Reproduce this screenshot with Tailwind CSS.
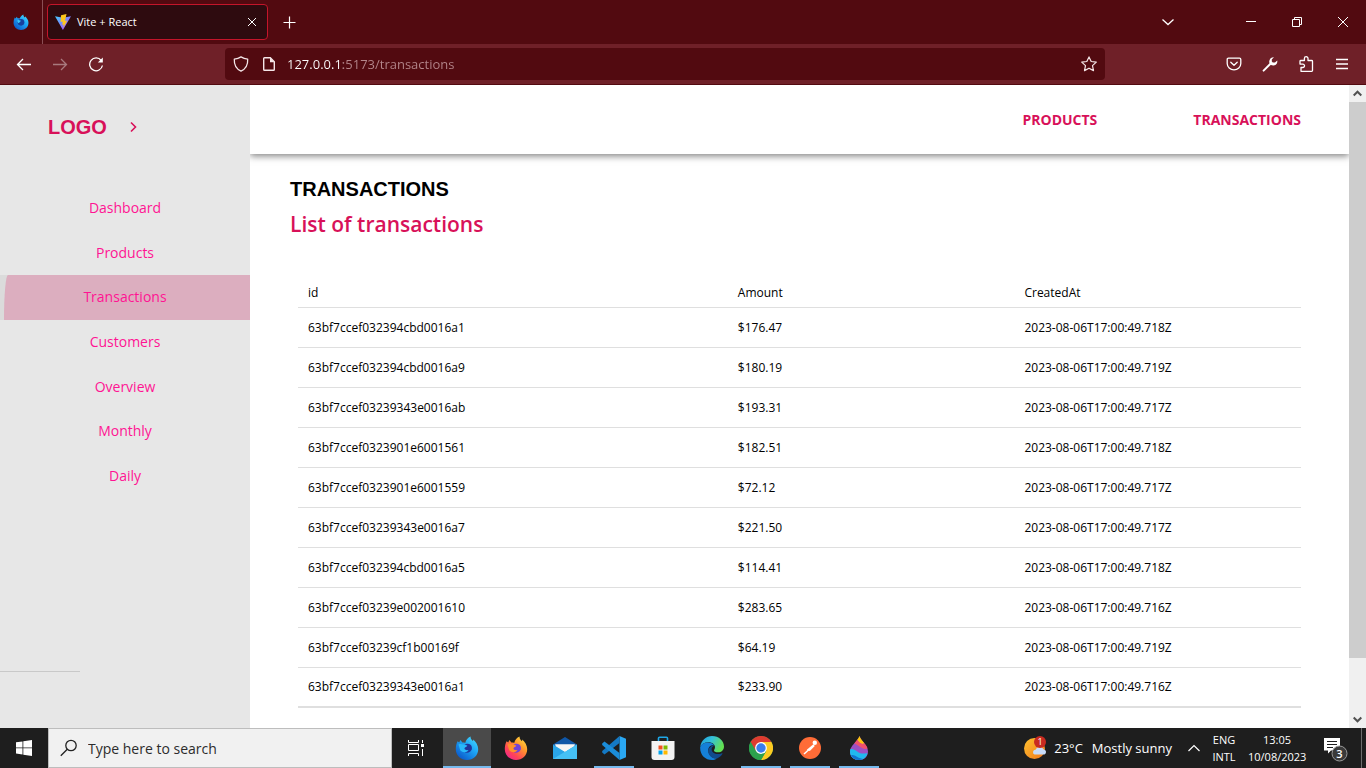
<!DOCTYPE html>
<html lang="en">
<head>
<meta charset="utf-8">
<meta name="viewport" content="width=device-width, initial-scale=1">
<title>Vite + React</title>
<script src="https://cdn.jsdelivr.net/npm/@tailwindcss/browser@4"></script>
</head>
<body class="flex h-screen flex-col overflow-hidden bg-white font-['Open_Sans','Noto_Sans',sans-serif]">

<!-- Shared colour definitions for the browser and app logos -->
<svg class="absolute size-0" aria-hidden="true">
  <defs>
    <linearGradient id="foxBlue" x1="1" y1="0" x2="0.2" y2="1"><stop offset="0" stop-color="#4fe3ff"/><stop offset=".45" stop-color="#1ea7f6"/><stop offset="1" stop-color="#0a55c8"/></linearGradient>
    <linearGradient id="foxFire" x1="1" y1="0" x2="0.2" y2="1"><stop offset="0" stop-color="#fff04a"/><stop offset=".4" stop-color="#ff9a2a"/><stop offset=".75" stop-color="#ff4457"/><stop offset="1" stop-color="#f0248f"/></linearGradient>
    <linearGradient id="viteTri" x1="0" y1="0" x2="1" y2="1"><stop offset="0" stop-color="#41d1ff"/><stop offset="1" stop-color="#bd34fe"/></linearGradient>
    <linearGradient id="edgeGreen" x1="0" y1="0" x2="1" y2="0.4"><stop offset="0" stop-color="#1b9de2"/><stop offset=".5" stop-color="#35c1d8"/><stop offset="1" stop-color="#62e053"/></linearGradient>
    <linearGradient id="sun" x1="0" y1="0" x2="1" y2="1"><stop offset="0" stop-color="#ffc22e"/><stop offset="1" stop-color="#f0781e"/></linearGradient>
    <symbol id="fox" viewBox="0 0 24 24">
      <path d="M2.6 5.2 4.2 6.6 5.4 4 7.4 6.6c1-.2 2 0 2.8.3C11 4 12.800 1.800 15.600 .6c-.2 2 .8 3.300 2.400 4.600.2-.6.2-1.200.2-1.700 2.800 2.700 5 5.700 5 9.700C23.200 19.500 18.300 24 12 24S.8 19.300.8 13.200c0-3 .6-5.700 1.800-8z"/>
    </symbol>
  </defs>
</svg>

<header class="shrink-0 text-white">
  <div class="flex h-11 items-center bg-[#520a10]">
    <button class="flex h-11 w-[41px] items-center justify-center" aria-label="Firefox">
      <svg class="size-4" viewBox="0 0 24 24"><use href="#fox" fill="url(#foxBlue)"/><circle cx="12" cy="12.500" r="5" fill="#173f9e"/><path d="M7 9c2 0 3 1 5 1-1 2-3 2-3 4-2-1-3-3-2-5z" fill="#35c8fb"/></svg>
    </button>
    <div class="ml-px h-11 w-px bg-[#8b4f55]"></div>
    <div class="ml-1 flex h-9 w-[221px] items-center rounded border border-[#c4152a] bg-[#2e0b0f] pr-[7px] pl-[7px]">
      <svg class="size-4" viewBox="0 0 16 16"><path d="M0 2.200 7.900 16 16 2.200 8 3.800z" fill="url(#viteTri)"/><path d="M11.500 0 6 1.200 5.600 8l2.100-.4-.5 3.200 1.500-.4-.4 3.300 4-7.200-2.300.4z" fill="#ffc61c"/></svg>
      <button class="ml-[6px] flex-1 pt-px text-left text-[11px] font-medium" role="tab" aria-selected="true">Vite + React</button>
      <button class="flex size-4 items-center justify-center" aria-label="Close tab"><svg class="size-[10px]" viewBox="0 0 10 10" fill="none" stroke="#fff" stroke-width="1"><path d="m1 1 8 8M9 1 1 9"/></svg></button>
    </div>
    <button class="ml-[15px] flex size-[14px] items-center justify-center" aria-label="New tab"><svg class="size-[14px]" viewBox="0 0 14 14" fill="none" stroke="#fff" stroke-width="1.200"><path d="M.5 7.500h12M6.500 1.500v12"/></svg></button>
    <button class="ml-auto flex h-11 w-9 items-center justify-center" aria-label="List all tabs"><svg class="size-[14px]" viewBox="0 0 14 14" fill="none" stroke="#fff" stroke-width="1.300"><path d="m1.500 4.500 5.500 5 5.500-5"/></svg></button>
    <div class="ml-[42px] flex">
      <button class="flex h-11 w-[46px] items-center justify-center" aria-label="Minimize"><svg class="size-[10px]" viewBox="0 0 10 10" fill="#fff"><path d="M0 4h10v1H0z"/></svg></button>
      <button class="flex h-11 w-[46px] items-center justify-center" aria-label="Restore"><svg class="size-[10px]" viewBox="0 0 10 10" fill="none" stroke="#fff"><path d="M.5 2.500h7v7h-7zM2.500 2.500v-2h7v7h-2"/></svg></button>
      <button class="flex h-11 w-[46px] items-center justify-center" aria-label="Close"><svg class="size-[10px]" viewBox="0 0 10 10" fill="none" stroke="#fff"><path d="m0 0 10 10M10 0 0 10"/></svg></button>
    </div>
  </div>

  <div class="flex h-[41px] items-center border-b border-[#520a10] bg-[#6f2028]">
    <div class="flex w-[225px] items-center gap-5 pl-4">
      <button aria-label="Back"><svg class="size-4" viewBox="0 0 16 16" fill="none" stroke="#fff" stroke-width="1.300"><path d="M15 8.500H1.500M7 3 1.500 8.500 7 14"/></svg></button>
      <button aria-label="Forward"><svg class="size-4 opacity-40" viewBox="0 0 16 16" fill="none" stroke="#fff" stroke-width="1.300"><path d="M1 8.500h13.500M9 3l5.500 5.500L9 14"/></svg></button>
      <button aria-label="Reload"><svg class="size-4" viewBox="0 0 16 16" fill="none" stroke="#fff" stroke-width="1.300"><path d="M13.200 4.500A6.400 6.400 0 1 0 14.400 9.500"/><path d="M14.800 1.500v5h-5z" fill="#fff" stroke="none"/></svg></button>
    </div>
    <div class="flex h-8 flex-1 items-center rounded bg-[#520a10] px-2">
      <svg class="size-4" viewBox="0 0 16 16" fill="none" stroke="#f5e6e8" stroke-width="1.300"><path d="M8 .9c2 1.300 4.300 2 6.700 2.200.3 5.400-1.700 9.700-6.700 12-5-2.300-7-6.600-6.700-12C3.700 2.900 6 2.200 8 .9z" stroke-linejoin="round"/></svg>
      <svg class="ml-3 size-4" viewBox="0 0 16 16" fill="none" stroke="#f5e6e8" stroke-width="1.400"><path d="M3.500 1.700h5.800L13.300 5.700v7.800q0 .8-.8.800h-9q-.8 0-.8-.8v-11q0-.8.8-.8z"/><path d="M9 1.500v4.700h4.500z" fill="#f5e6e8" stroke="none"/></svg>
      <input aria-label="Address" value="127.0.0.1:5173/transactions" spellcheck="false" class="ml-[10px] min-w-0 flex-1 bg-[linear-gradient(90deg,#ffffff_56px,#b4868b_56px)] bg-clip-text pt-[2px] text-[13px] text-transparent outline-none">
      <button aria-label="Bookmark this page"><svg class="size-4" viewBox="0 0 16 16" fill="none" stroke="#f5e6e8" stroke-width="1.200" stroke-linejoin="round"><path d="m8 .9 2.200 4.600 5.100.6-3.800 3.500 1 5L8 12.200l-4.500 2.400 1-5L.7 6.100l5.100-.6z"/></svg></button>
    </div>
    <div class="flex w-[261px] items-center justify-end gap-5 pr-4">
      <button aria-label="Save to Pocket"><svg class="size-4" viewBox="0 0 16 16" fill="none" stroke="#fff" stroke-width="1.300" stroke-linecap="round" stroke-linejoin="round"><path d="M2.500 2.200h11q1.300 0 1.300 1.300v4a6.800 6.300 0 0 1-13.600 0v-4q0-1.300 1.300-1.300z"/><path d="M4.800 6.300 8 9.300l3.200-3"/></svg></button>
      <button aria-label="Developer tools"><svg class="size-4" viewBox="0 0 16 16"><path d="M1.600 14.600 9 7.200" stroke="#fff" stroke-width="2" stroke-linecap="round"/><path d="M11.900 1.200 9.800 3.400v2.200l1 1h2.200l2.200-2.200c.5 1.900-.3 4.700-3.400 5-1.500.1-2.400-.2-3.400-1s-1.300-2-1.100-3.300c.4-2.700 2.600-4.300 4.600-3.900z" fill="#fff"/></svg></button>
      <button aria-label="Extensions"><svg class="size-4" viewBox="0 0 16 16" fill="none" stroke="#fff" stroke-width="1.300" stroke-linejoin="round"><path d="M3 15.300v-3.800h1.800a1.700 1.700 0 0 0 0-3.400H2V5.300q0-.8.800-.8h3.600V2.500a1.800 1.800 0 0 1 3.600 0v2h3.700q.8 0 .8.800v9.200q0 .8-.8.800z"/></svg></button>
      <button aria-label="Menu"><svg class="size-4" viewBox="0 0 16 16" fill="none" stroke="#fff" stroke-width="1.300"><path d="M2 3.500h12M2 8h12M2 12.500h12"/></svg></button>
    </div>
  </div>
</header>

<div class="flex min-h-0 flex-1">
  <aside class="flex w-[250px] shrink-0 flex-col bg-[#e7e7e7]">
    <div class="flex h-[84px] items-center pl-12">
      <a href="#" class="font-['Liberation_Sans',sans-serif] text-xl font-bold text-[#d81159]">LOGO</a>
      <button class="ml-5 flex size-[14px] items-center justify-center" aria-label="Collapse sidebar"><svg class="size-[14px]" viewBox="0 0 14 14" fill="none" stroke="#d81159" stroke-width="1.600"><path d="m4 2.500 4.500 4.500L4 11.500"/></svg></button>
    </div>
    <nav class="mt-[17px] flex h-[312px] flex-col text-center text-sm text-[#ff1493]">
      <a href="#" class="flex flex-1 items-center justify-center">Dashboard</a>
      <a href="#" class="flex flex-1 items-center justify-center">Products</a>
      <a href="#" aria-current="page" class="flex flex-1 bg-[#dbdbdb]"><span class="ml-1 flex flex-1 items-center justify-center rounded-tl-[4px_44px] bg-[#dcaebf] pr-1">Transactions</span></a>
      <a href="#" class="flex flex-1 items-center justify-center">Customers</a>
      <a href="#" class="flex flex-1 items-center justify-center">Overview</a>
      <a href="#" class="flex flex-1 items-center justify-center">Monthly</a>
      <a href="#" class="flex flex-1 items-center justify-center">Daily</a>
    </nav>
    <div class="mt-auto mb-14 h-px w-20 bg-[#c9c9c9]"></div>
  </aside>

  <div class="flex min-w-0 flex-1 flex-col">
    <nav class="flex h-[69px] shrink-0 items-center justify-end gap-24 bg-white pr-12 text-sm font-bold text-[#d81159] shadow-[0_2px_7px_rgba(0,0,0,0.5)] [clip-path:inset(0_0_-12px_0)]">
      <a href="#">PRODUCTS</a>
      <a href="#">TRANSACTIONS</a>
    </nav>
    <main class="flex-1 overflow-hidden pt-5 pr-12 pl-10">
      <h1 class="font-['Liberation_Sans',sans-serif] text-xl leading-[30px] font-bold text-black">TRANSACTIONS</h1>
      <h2 class="mt-[2px] text-[21px] leading-9 font-semibold text-[#d81159]">List of transactions</h2>
      <table class="mt-9 ml-2 w-[calc(100%-8px)] table-fixed border-collapse text-left text-xs text-black">
        <thead>
          <tr class="h-[29px] border-b border-[#dfdfdf]"><th class="w-3/7 px-[10px] pt-px font-normal">id</th><th class="px-[10px] pt-px font-normal">Amount</th><th class="px-[10px] pt-px font-normal">CreatedAt</th></tr>
        </thead>
        <tbody class="border-b-2 border-[#dfdfdf] [&_td]:px-[10px] [&_td]:pt-px [&_tr]:h-10 [&_tr]:border-b [&_tr]:border-[#dfdfdf] [&_tr:last-child]:border-b-2">
          <tr><td>63bf7ccef032394cbd0016a1</td><td>$176.47</td><td>2023-08-06T17:00:49.718Z</td></tr>
          <tr><td>63bf7ccef032394cbd0016a9</td><td>$180.19</td><td>2023-08-06T17:00:49.719Z</td></tr>
          <tr><td>63bf7ccef03239343e0016ab</td><td>$193.31</td><td>2023-08-06T17:00:49.717Z</td></tr>
          <tr><td>63bf7ccef0323901e6001561</td><td>$182.51</td><td>2023-08-06T17:00:49.718Z</td></tr>
          <tr><td>63bf7ccef0323901e6001559</td><td>$72.12</td><td>2023-08-06T17:00:49.717Z</td></tr>
          <tr><td>63bf7ccef03239343e0016a7</td><td>$221.50</td><td>2023-08-06T17:00:49.717Z</td></tr>
          <tr><td>63bf7ccef032394cbd0016a5</td><td>$114.41</td><td>2023-08-06T17:00:49.718Z</td></tr>
          <tr><td>63bf7ccef03239e002001610</td><td>$283.65</td><td>2023-08-06T17:00:49.716Z</td></tr>
          <tr><td>63bf7ccef03239cf1b00169f</td><td>$64.19</td><td>2023-08-06T17:00:49.719Z</td></tr>
          <tr><td>63bf7ccef03239343e0016a1</td><td>$233.90</td><td>2023-08-06T17:00:49.716Z</td></tr>
        </tbody>
      </table>
    </main>
  </div>

  <!-- Page scrollbar -->
  <div class="flex w-[17px] shrink-0 flex-col bg-[#f0f0f0]">
    <button class="flex h-[17px] items-center justify-center" aria-label="Scroll up"><svg class="h-[7px] w-[9px]" viewBox="0 0 9 7" fill="none" stroke="#505050" stroke-width="2"><path d="m.7 5.500 3.800-3.800 3.800 3.800"/></svg></button>
    <div class="flex flex-1 flex-col"><div class="h-[91.3%] bg-[#cdcdcd]"></div></div>
    <button class="flex h-[17px] items-center justify-center" aria-label="Scroll down"><svg class="h-[7px] w-[9px]" viewBox="0 0 9 7" fill="none" stroke="#505050" stroke-width="2"><path d="m.7 1.500 3.800 3.800 3.800-3.800"/></svg></button>
  </div>
</div>

<footer class="flex h-10 shrink-0 bg-[#1e1e1e] text-white">
  <button class="flex w-12 items-center justify-center" aria-label="Start"><svg class="size-4" viewBox="0 0 16 16" fill="#fff"><path d="M0 2.300 6.500 1.400v6.100H0zM7.300 1.300 16 0v7.500H7.300zM0 8.300h6.500v6.200L0 13.600zM7.300 8.300H16V16l-8.700-1.300z"/></svg></button>
  <label class="flex w-[344px] items-center border border-[#bdbdbd] bg-[#f1f1f1] pl-[11px]">
    <svg class="size-[18px]" viewBox="0 0 18 18" fill="none" stroke="#222" stroke-width="1.300"><circle cx="11" cy="6.500" r="5.200"/><path d="M7.300 10.300.8 16.800"/></svg>
    <input aria-label="Search" placeholder="Type here to search" class="ml-[10px] min-w-0 flex-1 bg-transparent pt-[2px] text-sm outline-none placeholder:text-[#2c2c2c]">
  </label>
  <button class="flex w-12 items-center justify-center" aria-label="Task view"><svg class="size-4" viewBox="0 0 16 16" fill="none" stroke="#fff" stroke-width="1"><path d="M.5 0v2.500h10V0M.5 16v-2.500h10V16M.5 4.500h10v6H.500zM14.500 0v3M14.500 9v7"/><path d="M13 4h3v3h-3z" fill="#fff" stroke="none"/></svg></button>
  <div class="ml-[3px] flex gap-px">
    <button class="flex w-12 items-center justify-center border-b-2 border-[#76b9ed] bg-[#4a4a4a] pt-px" aria-label="Firefox Developer Edition"><svg class="size-6" viewBox="0 0 24 24"><use href="#fox" fill="url(#foxBlue)"/><path d="M9 9.500c1.500-2 4.500-2.500 6.500-.7 2.200 2 1.700 5.500-.5 7-3 2-6.500.5-7.500-2z" fill="#20359b"/><path d="M3.500 8.500C6 7.300 9 8.800 12.300 9.500c-.3 1.500-2.500 1.500-2.800 2.800-.3 1.500 2 2.200 4 1.700-1.500 2.800-6 3-8.300.3z" fill="#29b8fa"/></svg></button>
    <button class="flex w-12 items-center justify-center" aria-label="Firefox"><svg class="size-6" viewBox="0 0 24 24"><use href="#fox" fill="url(#foxFire)"/><path d="M9 9.500c1.500-2 4.500-2.500 6.500-.7 2.200 2 1.700 5.500-.5 7-3 2-6.500.5-7.500-2z" fill="#7041d9"/><path d="M3.500 8.500C6 7.300 9 8.800 12.300 9.500c-.3 1.500-2.500 1.500-2.800 2.800-.3 1.500 2 2.200 4 1.700-1.500 2.800-6 3-8.300.3z" fill="#ff912b"/></svg></button>
    <button class="flex w-12 items-center justify-center" aria-label="Mail"><svg class="size-6" viewBox="0 0 24 24"><path d="M0 8.500 12 1l12 7.500V14H0z" fill="#0f57a8"/><path d="M2.500 8.500h19V14L12 16l-9.500-2z" fill="#f5f5f5"/><path d="M0 8.500 12 16l12-7.500V23H0z" fill="#2aa5e8"/><path d="M24 8.500 0 23h24z" fill="#45c0f5"/><path d="M1.500 8.500h21L12 15.500z" fill="#f5f5f5"/></svg></button>
    <button class="flex w-12 flex-col items-center" aria-label="Visual Studio Code"><span class="flex h-[38px] items-center pt-[2px]"><svg class="size-6" viewBox="0 0 24 24"><path d="M17.500 0 24 2.800v18.400L17.500 24z" fill="#2aa7f2"/><path d="M17.500 0v7L2.500 18.500.2 16.600v-1.500z" fill="#1479c4"/><path d="M17.500 24v-7L2.500 5.500.2 7.400v1.500z" fill="#1b8dd9"/></svg></span><span class="h-0.5 w-10 bg-[#76b9ed]"></span></button>
    <button class="flex w-12 items-center justify-center" aria-label="Microsoft Store"><svg class="size-6" viewBox="0 0 24 24"><path d="M7.500 6V2.200q0-1 1-1h7q1 0 1 1V6" fill="none" stroke="#1ea8e8" stroke-width="1.600"/><path d="M.5 5h23v16q0 3-3 3h-17q-3 0-3-3z" fill="#f3f3f3"/><path d="M7.500 9.500h4v4h-4z" fill="#f25022"/><path d="M12.500 9.500h4v4h-4z" fill="#7fba00"/><path d="M7.500 14.500h4v4h-4z" fill="#00a4ef"/><path d="M12.500 14.500h4v4h-4z" fill="#ffb900"/></svg></button>
    <button class="flex w-12 items-center justify-center" aria-label="Microsoft Edge"><svg class="size-6" viewBox="0 0 24 24"><path d="M.3 10.500C1.300 4.300 6 0 12 0c7 0 12 5 12 10.500 0 3.500-2.500 5.800-6 5.800-2.500 0-4-.8-4-1.800s1-1.500 1-3.500c0-2.500-2.500-4.800-6.500-4.800-4 0-7 2-8.200 4.300z" fill="url(#edgeGreen)"/><path d="M.2 11c.8-2.500 4-4.600 8-4.600 3.300 0 5.500 1.600 6.200 3.300C11 8.400 8.300 11 8.300 14.500c0 4.500 4 8 8.500 8-1.500 1-3 1.500-4.800 1.500C5 24-.3 18.500.2 11z" fill="#1580d8"/><path d="M14 9.700c-3 0-5.700 2-5.700 5.300 0 4.500 4 8 8.700 7.500 2.500-1 4.300-2.600 5.500-4.700.3-.5-.1-.8-.6-.6-5 2.300-10.300-.2-10.300-4 0-1.500 1-2.800 2.400-3.500z" fill="#114b8c"/></svg></button>
    <button class="flex w-12 flex-col items-center" aria-label="Google Chrome"><span class="flex h-[38px] items-center pt-[2px]"><svg class="size-6" viewBox="0 0 24 24"><circle cx="12" cy="12" r="12" fill="#2ca14d"/><path d="M12 12 1.600 6A12 12 0 0 1 22.400 6z" fill="#df3b30"/><path d="M12 6h10.400A12 12 0 0 1 12 24l5.200-9z" fill="#fdca22"/><path d="M1.600 6 6.800 15 12 12V6z" fill="#df3b30"/><path d="M1.600 6a12 12 0 0 0 10.400 18l5.200-9L12 17.500 6.800 15z" fill="#2ca14d"/><circle cx="12" cy="12" r="5.900" fill="#fff"/><circle cx="12" cy="12" r="4.700" fill="#3b7ded"/></svg></span><span class="h-0.5 w-10 bg-[#76b9ed]"></span></button>
    <button class="flex w-12 flex-col items-center" aria-label="Postman"><span class="flex h-[38px] items-center pt-[2px]"><svg class="size-6" viewBox="0 0 24 24"><circle cx="12" cy="12" r="11" fill="#ff6c37"/><circle cx="16.800" cy="6.800" r="2.200" fill="#fff"/><path d="m15.300 8.300 1.500 1.600-5 5.100-3-1.200z" fill="#fff"/><path d="m6 18 5-4.500" stroke="#fff" stroke-width="1.500"/></svg></span><span class="h-0.5 w-10 bg-[#76b9ed]"></span></button>
    <button class="flex w-12 flex-col items-center" aria-label="Paint 3D"><span class="flex h-[38px] items-center pt-[2px]"><svg class="size-6" viewBox="0 0 24 24"><path d="M12.500 0C14 5 21 9.500 21 15.500 21 20.500 17 24 12 24s-9-3.500-9-8.500C3 9.500 10.500 6 12.500 0z" fill="#9c4fc4"/><path d="M12.500 0c.8 2.600 3 5 5 7.300-3 1.700-5-.3-7.300-3.500C11.200 2.700 12 1.400 12.500 0z" fill="#ffc40c"/><path d="M10.200 3.800c2 3 4.300 5.200 7.300 3.500 1.300 1.600 2.500 3.300 3.100 5.200-5 2-8.600-3.500-13.400-5z" fill="#f0506e"/><path d="M3.200 13.500c4-2 7 3.500 11 4 2.500.3 4.500-.5 6.300-.2C19.500 21.500 16 24 12 24c-5 0-9.200-3.500-9-8.500z" fill="#20b8ee"/><path d="M4 19.500c3-2 6 2.500 12 3.500-4.500 2.200-9.800.6-12-3.500z" fill="#1273cf"/></svg></span><span class="h-0.5 w-10 bg-[#76b9ed]"></span></button>
  </div>

  <div class="ml-auto flex items-center">
    <button class="flex items-center text-[13px]">
      <svg class="size-6" viewBox="0 0 24 24"><circle cx="10.500" cy="12.500" r="10.500" fill="url(#sun)"/><path d="M10.500 18.500a2.500 2.500 0 0 1 1-4.800 4.500 4.500 0 0 1 8-.5 2.800 2.800 0 0 1 1 5.300z" fill="#c8dcfa"/><circle cx="16" cy="6" r="6" fill="#c92a20"/><text x="16" y="9" text-anchor="middle" font-size="9" fill="#fff">1</text></svg>
      <span class="ml-[6px] pt-[2px]">23°C</span><span class="ml-[9px] pt-[2px]">Mostly sunny</span>
    </button>
    <button class="ml-4 flex size-3 items-center justify-center" aria-label="Show hidden icons"><svg class="size-3" viewBox="0 0 12 12" fill="none" stroke="#fff" stroke-width="1.200"><path d="m.5 9 5.500-5.500L11.500 9"/></svg></button>
    <button class="ml-3 w-6 text-[11px] leading-[17px]"><span class="block">ENG</span><span class="block">INTL</span></button>
    <button class="ml-3 w-[58px] text-center text-[11px] leading-[17px]"><span class="block">13:05</span><span class="block">10/08/2023</span></button>
    <button class="ml-[18px] flex pt-[3px]" aria-label="3 notifications"><svg class="size-6" viewBox="0 0 24 24"><path d="M0 0h16v12.500H7l-3 3v-3H0z" fill="#fff"/><path d="M3 3.500h10M3 6.500h10M3 9.500h6" stroke="#1e1e1e"/><circle cx="15.500" cy="15.500" r="7.500" fill="#3a3a3a" stroke="#999"/><text x="15.500" y="19.500" text-anchor="middle" font-size="11" font-weight="600" fill="#fff">3</text></svg></button>
    <div class="mr-1 ml-[13px] h-10 w-px bg-[#6d6d6d]"></div>
  </div>
</footer>
</body>
</html>
